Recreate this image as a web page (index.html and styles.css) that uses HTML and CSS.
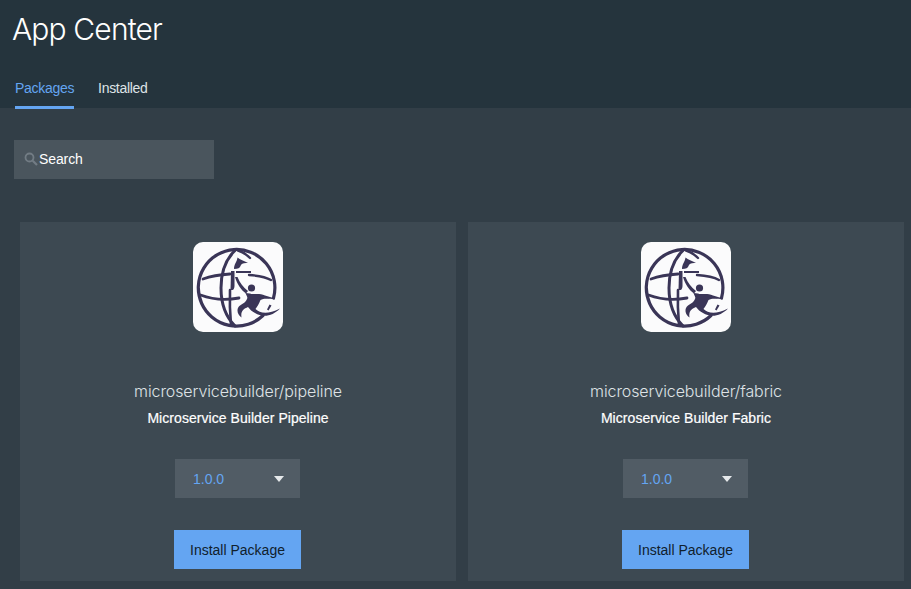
FILE: index.html
```html
<!DOCTYPE html>
<html lang="en">
<head>
<meta charset="utf-8">
<title>App Center</title>
<link rel="stylesheet" href="styles.css">
</head>
<body>
<svg class="defs" width="0" height="0" aria-hidden="true">
  <symbol id="logo" viewBox="0 0 90 90">
    <rect width="90" height="90" rx="10" fill="#fbfbfc"/>
    <g fill="none" stroke="#3a3557" stroke-linecap="round">
      <path stroke-width="3.200" d="M80.500 56A38.300 38.300 0 1 0 70 73.500"/>
      <path stroke-width="3" d="M42 8.500C32 18 28 32 28 46c0 14 4 28 14 38"/>
      <path stroke-width="2.400" d="M45 8.500C50 10 54 13 57 16"/>
      <path stroke-width="2.600" d="M37 48C36.500 60 37 72 38 83"/>
      <path stroke-width="2.800" d="M10 37C18 34 28 32.500 37 32"/>
      <path stroke-width="2.400" d="M56 33C64 33.500 72 34.500 78 38"/>
      <path stroke-width="2.800" d="M7.500 53C18 57 32 58.500 46 56"/>
    </g>
    <g fill="#3a3557">
      <path d="M38 29h3.500v15c0 2-1 4-2 4h-2z"/>
      <path d="M43 29h15v2H43z"/>
      <path d="M41 27C41 22 44 20 44.500 15.500C47 18 51 18.500 55 21C51 20.500 48 21.500 47.500 24C47 26 45 27 41 27z"/>
      <circle cx="58.500" cy="46" r="3.600"/>
      <path d="M42 35L44.500 35C47 41 50 45 55 49L53 51.500C48 48 44 42 42 35z"/>
      <path d="M52.500 51L57 51.500C60 53 66 50.500 72 53.500L82 56.500L82 57.200C75 57 71 56 67.500 58C66 62 64 65 62.500 67C67 71 74 73 87 66.500C80 74 70 76 62 71C59 69.500 57 67.500 55 65C50.500 67 47.500 69 48.500 75.500C44 72.500 43 66.500 47 63.500C50 61.500 53 60 54 57C55 55 53.500 54 52.500 51z"/>
      <path d="M76.500 62.500L78.500 63.500L75.500 68.500L74 67.500z"/>
    </g>
  </symbol>
</svg>
<header class="topbar">
  <h1 class="title">App Center</h1>
  <nav class="tabs">
    <a class="tab tab-active">Packages</a>
    <a class="tab">Installed</a>
  </nav>
</header>
<main class="content">
  <div class="search">
    <svg class="search-icon" viewBox="0 0 14 14" width="14" height="14" aria-hidden="true">
      <circle cx="5.500" cy="5.500" r="4" fill="none" stroke="#727c84" stroke-width="1.800"/>
      <path d="M8.700 8.700L13 13" stroke="#727c84" stroke-width="2.200" fill="none"/>
    </svg>
    <span class="search-text">Search</span>
  </div>
  <section class="cards">
    <article class="card">
      <svg class="logo" width="90" height="90" role="img" aria-label="Package logo"><use href="#logo"/></svg>
      <h2 class="pkg-name">microservicebuilder/pipeline</h2>
      <p class="pkg-desc">Microservice Builder Pipeline</p>
      <div class="select"><span>1.0.0</span><i class="caret"></i></div>
      <button class="install">Install Package</button>
    </article>
    <article class="card">
      <svg class="logo" width="90" height="90" role="img" aria-label="Package logo"><use href="#logo"/></svg>
      <h2 class="pkg-name">microservicebuilder/fabric</h2>
      <p class="pkg-desc">Microservice Builder Fabric</p>
      <div class="select"><span>1.0.0</span><i class="caret"></i></div>
      <button class="install">Install Package</button>
    </article>
  </section>
</main>
</body>
</html>
```
FILE: styles.css
```css
* { box-sizing: border-box; }
html, body { height: 100%; }
body {
  margin: 0;
  background: #323e47;
  color: #fff;
  font-family: "Liberation Sans", Arial, sans-serif;
  overflow: hidden;
}
.defs { position: absolute; }
.topbar {
  height: 108px;
  background: #25343d;
  padding: 11px 0 0 12px;
}
.title {
  margin: 0;
  font-family: Inter, "Liberation Sans", sans-serif;
  font-size: 30px;
  font-weight: 300;
  line-height: 36px;
  letter-spacing: -0.85px;
}
.tabs {
  display: flex;
  gap: 24px;
  margin: 23px 0 0 3px;
}
.tab {
  height: 39px;
  padding-top: 10px;
  font-size: 14px;
  line-height: 17px;
  color: #dfe3e6;
  letter-spacing: -0.3px;
}
.tab-active {
  color: #64a5f2;
  border-bottom: 3px solid #64a5f2;
}
.content { padding: 32px 7px 0 14px; }
.search {
  width: 200px;
  height: 39px;
  background: #4a555d;
  display: flex;
  align-items: center;
  padding: 0 0 2px 10px;
  gap: 1px;
}
.search-text { font-size: 14px; letter-spacing: -0.1px; }
.cards {
  display: grid;
  grid-template-columns: 436px 436px;
  gap: 12px;
  margin: 43px 0 0 6px;
}
.card {
  height: 359px;
  background: #3d4952;
  display: flex;
  flex-direction: column;
  align-items: center;
  padding-top: 20px;
}
.logo { display: block; }
.pkg-name {
  margin: 49px 0 0;
  font-family: Inter, "Liberation Sans", sans-serif;
  font-size: 16px;
  font-weight: 300;
  line-height: 20px;
  color: #dfe3e6;
  letter-spacing: -0.1px;
}
.pkg-desc {
  margin: 9px 0 0;
  font-size: 14px;
  line-height: 17px;
  letter-spacing: 0.05px;
  -webkit-text-stroke: 0.2px #fff;
}
.select {
  width: 125px;
  height: 39px;
  margin: 32px 1px 0 0;
  background: #515c65;
  display: flex;
  align-items: center;
  justify-content: space-between;
  padding: 0 16px 0 18px;
  font-size: 14px;
  color: #64a5f2;
}
.caret {
  width: 0;
  height: 0;
  border-left: 5.500px solid transparent;
  border-right: 5.500px solid transparent;
  border-top: 6px solid #e6e9eb;
}
.install {
  width: 127px;
  height: 39px;
  margin: 32px 1px 0 0;
  background: #64a5f2;
  border: 0;
  padding: 0;
  font-family: "Liberation Sans", Arial, sans-serif;
  font-size: 14px;
  color: #10202c;
}
```
